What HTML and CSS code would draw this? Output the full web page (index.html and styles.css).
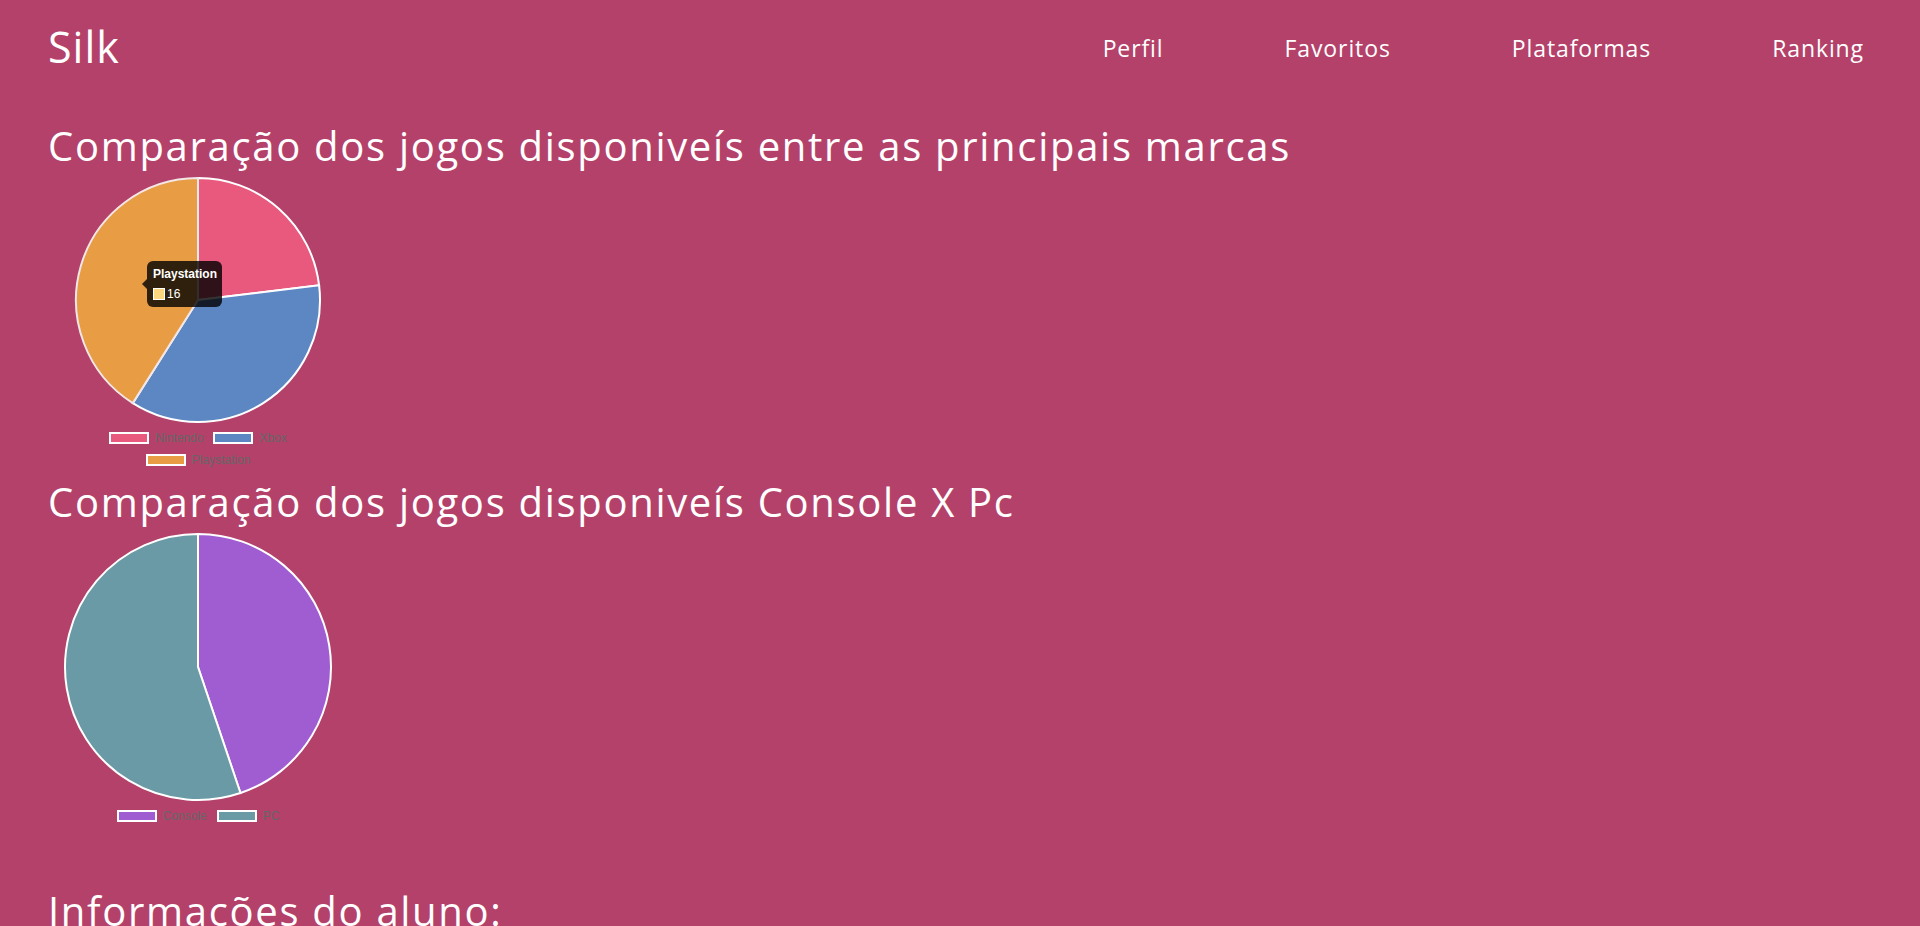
FILE: index.html
```html
<!DOCTYPE html>
<html lang="pt-BR">
<head>
<meta charset="utf-8">
<title>Silk</title>
<link rel="stylesheet" href="styles.css">
</head>
<body>
<header class="topbar">
  <div class="logo">Silk</div>
  <nav class="menu">
    <a class="menu-item" href="#">Perfil</a>
    <a class="menu-item" href="#">Favoritos</a>
    <a class="menu-item" href="#">Plataformas</a>
    <a class="menu-item" href="#">Ranking</a>
  </nav>
</header>
<main class="content">
  <h2 class="section-title first">Comparação dos jogos disponiveís entre as principais marcas</h2>
  <div class="chart chart-brands">
    <svg class="pie" width="300" height="254" viewBox="0 0 300 254">
      <path d="M150 127 L150 5 A122 122 0 0 1 271.11 112.29 Z" fill="#e8597d" stroke="#fff" stroke-width="2"/>
      <path d="M150 127 L271.11 112.29 A122 122 0 0 1 84.79 230.11 Z" fill="#5c87c3" stroke="#fff" stroke-width="2"/>
      <path d="M150 127 L84.79 230.11 A122 122 0 0 1 150 5 Z" fill="#e89c44" stroke="#f2e6e6" stroke-width="2"/>
    </svg>
    <div class="legend">
      <div class="legend-row">
        <span class="legend-item"><span class="swatch sw-nintendo"></span>Nintendo</span>
        <span class="legend-item"><span class="swatch sw-xbox"></span>Xbox</span>
      </div>
      <div class="legend-row">
        <span class="legend-item"><span class="swatch sw-ps"></span>Playstation</span>
      </div>
    </div>
    <div class="tooltip">
      <div class="tooltip-title">Playstation</div>
      <div class="tooltip-body"><span class="tooltip-swatch"></span>16</div>
    </div>
  </div>
  <h2 class="section-title">Comparação dos jogos disponiveís Console X Pc</h2>
  <div class="chart chart-platforms">
    <svg class="pie" width="300" height="276" viewBox="0 0 300 276">
      <path d="M150 138 L150 5 A133 133 0 0 1 192.47 264.04 Z" fill="#a05cd1" stroke="#fff" stroke-width="2"/>
      <path d="M150 138 L192.47 264.04 A133 133 0 1 1 150 5 Z" fill="#6a9aa5" stroke="#fff" stroke-width="2"/>
    </svg>
    <div class="legend">
      <div class="legend-row">
        <span class="legend-item"><span class="swatch sw-console"></span>Console</span>
        <span class="legend-item"><span class="swatch sw-pc"></span>PC</span>
      </div>
    </div>
  </div>
  <h2 class="section-title info">Informações do aluno:</h2>
</main>
</body>
</html>
```
FILE: styles.css
```css
html, body {
  margin: 0;
  padding: 0;
}
body {
  background: #b4416a;
  color: #fff;
  font-family: "Open Sans", "Noto Sans", sans-serif;
  overflow: hidden;
  height: 926px;
}
.topbar {
  display: flex;
  align-items: center;
  justify-content: space-between;
  height: 96px;
  padding: 0 56px 0 48px;
}
.logo {
  font-size: 43px;
  letter-spacing: 1px;
  line-height: 1;
  margin-top: -4px;
}
.menu {
  display: flex;
  gap: 121px;
}
.menu-item {
  color: #fff;
  text-decoration: none;
  font-size: 23px;
  letter-spacing: 0.9px;
}
.content {
  padding: 0 48px;
}
.section-title {
  margin: 0;
  font-weight: 400;
  font-size: 40px;
  line-height: 48px;
  letter-spacing: 1.7px;
  white-space: nowrap;
}
.section-title.first {
  margin-top: 26px;
}
.chart {
  position: relative;
  width: 300px;
}
.chart-brands {
  margin-top: 3px;
}
.chart-brands + .section-title {
  margin-top: 7px;
}
.chart-platforms {
  margin-top: 3px;
}
.section-title.info {
  margin-top: 60px;
}
.pie {
  display: block;
}
.legend {
  font-family: "Liberation Sans", Arial, sans-serif;
  font-size: 12px;
  color: #666;
}
.legend-row {
  display: flex;
  justify-content: center;
  gap: 10px;
  height: 22px;
  align-items: center;
}
.legend-item {
  display: flex;
  align-items: center;
  gap: 6px;
}
.swatch {
  display: block;
  width: 36px;
  height: 8px;
  border: 2px solid #fff;
}
.sw-nintendo { background: #e8597d; }
.sw-xbox { background: #5c87c3; }
.sw-ps { background: #e89c44; }
.sw-console { background: #a05cd1; }
.sw-pc { background: #6a9aa5; }
.tooltip {
  position: absolute;
  left: 99px;
  top: 88px;
  width: 63px;
  padding: 6px 6px;
  background: rgba(0, 0, 0, 0.8);
  border-radius: 6px;
  font-family: "Liberation Sans", Arial, sans-serif;
  font-size: 12px;
  color: #fff;
}
.tooltip::before {
  content: "";
  position: absolute;
  left: -5px;
  top: 18px;
  border-style: solid;
  border-width: 5px 5px 5px 0;
  border-color: transparent rgba(0, 0, 0, 0.8) transparent transparent;
}
.tooltip-title {
  font-weight: 700;
  line-height: 14px;
  margin-bottom: 6px;
}
.tooltip-body {
  display: flex;
  align-items: center;
  gap: 2px;
  line-height: 14px;
}
.tooltip-swatch {
  display: block;
  width: 10px;
  height: 10px;
  border: 1px solid #fff;
  background: #fdd77f;
}
```
